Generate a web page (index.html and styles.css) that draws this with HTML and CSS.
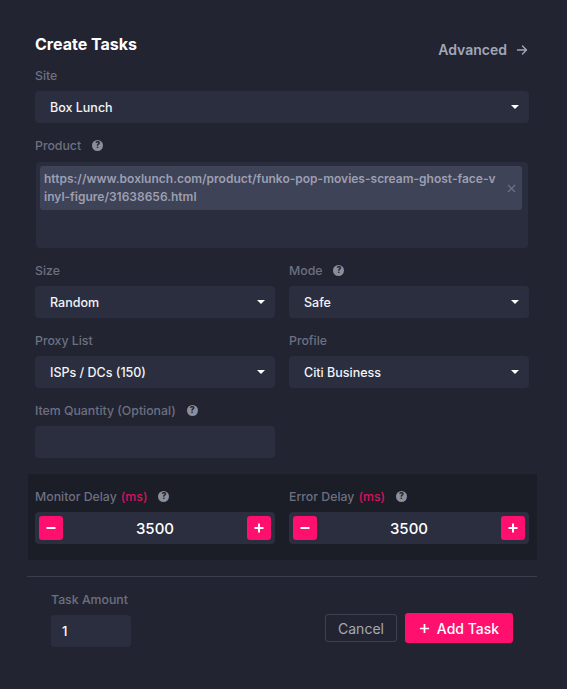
FILE: index.html
```html
<!DOCTYPE html>
<html>
<head>
<meta charset="utf-8">
<link rel="stylesheet" href="styles.css">
</head>
<body>
<div class="modal">
  <div class="content">
    <div class="header">
      <h1 class="title">Create Tasks</h1>
      <div class="advanced">Advanced
        <svg class="arrow" width="12" height="12" viewBox="0 0 12 12"><path d="M1.5 6h9M6.5 2l4 4-4 4" fill="none" stroke="currentColor" stroke-width="1.4" stroke-linecap="round" stroke-linejoin="round"/></svg>
      </div>
    </div>

    <div class="field">
      <label class="label">Site</label>
      <div class="select"><span>Box Lunch</span><i class="caret"></i></div>
    </div>

    <div class="field">
      <label class="label">Product <span class="help">?</span></label>
      <div class="textarea">
        <div class="chip">
          <span class="chip-text"><span class="line">https://www.boxlunch.com/product/funko-pop-movies-scream-ghost-face-v</span><span class="line">inyl-figure/31638656.html</span></span>
          <svg class="chip-x" width="9" height="9" viewBox="0 0 9 9"><path d="M1 1l7 7M8 1L1 8" stroke="currentColor" stroke-width="1.2"/></svg>
        </div>
      </div>
    </div>

    <div class="grid">
      <div class="field">
        <label class="label">Size</label>
        <div class="select"><span>Random</span><i class="caret"></i></div>
      </div>
      <div class="field">
        <label class="label">Mode <span class="help">?</span></label>
        <div class="select"><span>Safe</span><i class="caret"></i></div>
      </div>
      <div class="field">
        <label class="label">Proxy List</label>
        <div class="select"><span>ISPs / DCs (150)</span><i class="caret"></i></div>
      </div>
      <div class="field">
        <label class="label">Profile</label>
        <div class="select"><span>Citi Business</span><i class="caret"></i></div>
      </div>
      <div class="field last">
        <label class="label">Item Quantity (Optional) <span class="help">?</span></label>
        <div class="input"></div>
      </div>
    </div>
  </div>

  <div class="delays">
    <div class="grid">
      <div class="field">
        <label class="label">Monitor Delay <span class="ms">(ms)</span> <span class="help">?</span></label>
        <div class="counter">
          <button class="step"><svg width="12" height="12" viewBox="0 0 12 12"><path d="M1.5 6h9" stroke="#fff" stroke-width="2"/></svg></button>
          <span class="value">3500</span>
          <button class="step"><svg width="12" height="12" viewBox="0 0 12 12"><path d="M1.5 6h9M6 1.5v9" stroke="#fff" stroke-width="2"/></svg></button>
        </div>
      </div>
      <div class="field">
        <label class="label">Error Delay <span class="ms">(ms)</span> <span class="help">?</span></label>
        <div class="counter">
          <button class="step"><svg width="12" height="12" viewBox="0 0 12 12"><path d="M1.5 6h9" stroke="#fff" stroke-width="2"/></svg></button>
          <span class="value">3500</span>
          <button class="step"><svg width="12" height="12" viewBox="0 0 12 12"><path d="M1.5 6h9M6 1.5v9" stroke="#fff" stroke-width="2"/></svg></button>
        </div>
      </div>
    </div>
  </div>

  <div class="divider"></div>

  <div class="footer">
    <div class="field">
      <label class="label">Task Amount</label>
      <div class="input small"><span>1</span></div>
    </div>
    <div class="actions">
      <button class="btn-cancel">Cancel</button>
      <button class="btn-add"><svg width="11" height="11" viewBox="0 0 12 12"><path d="M1 6h10M6 1v10" stroke="#fff" stroke-width="1.9"/></svg>Add Task</button>
    </div>
  </div>
</div>
</body>
</html>
```

FILE: styles.css
```css
* { box-sizing: border-box; }
html, body {
  margin: 0;
  padding: 0;
  background: #222531;
  font-family: Inter, "Noto Sans", sans-serif;
}
.modal {
  width: 567px;
  height: 689px;
  padding-top: 32px;
}
.content {
  padding: 0 38px 0 35px;
}
.header {
  display: flex;
  justify-content: space-between;
  align-items: flex-end;
  margin-bottom: 11px;
}
.title {
  margin: 0;
  font-size: 16px;
  line-height: 24px;
  font-weight: 700;
  color: #ffffff;
}
.advanced {
  display: flex;
  align-items: center;
  gap: 9px;
  color: #a3a6b8;
  font-size: 14px;
  font-weight: 600;
  line-height: 18px;
  margin-bottom: -3px;
  margin-right: 1px;
}
.arrow { display: block; }
.field {
  display: flex;
  flex-direction: column;
  gap: 8px;
  margin-bottom: 14px;
}
.label {
  display: flex;
  align-items: center;
  gap: 4px;
  height: 16px;
  font-size: 12.3px;
  font-weight: 500;
  color: #6d7081;
}
.help {
  display: inline-flex;
  align-items: center;
  justify-content: center;
  width: 11px;
  height: 11px;
  border-radius: 50%;
  background: #8b8e9b;
  color: #222531;
  font-size: 8.5px;
  font-weight: 800;
  margin-left: 7px;
  line-height: 1;
}
.ms { color: #d3145f; }
.select, .input {
  height: 32px;
  background: #2a2e3f;
  border-radius: 4px;
  display: flex;
  align-items: center;
  justify-content: space-between;
  padding: 0 10px 0 15px;
  color: #f3f4f7;
  font-size: 12.5px;
  font-weight: 500;
}
.caret {
  width: 0;
  height: 0;
  border-left: 4px solid transparent;
  border-right: 4px solid transparent;
  border-top: 4.5px solid #ffffff;
}
.textarea {
  height: 86px;
  margin: 1px 1px 0 1px;
  background: #292d3e;
  border-radius: 4px;
  padding: 4px 6px 4px 4px;
}
.chip {
  background: #3f4357;
  border-radius: 3px;
  height: 44px;
  display: flex;
  align-items: center;
  justify-content: space-between;
  padding: 0 6px 0 4px;
}
.chip-text {
  display: flex;
  flex-direction: column;
  color: #9c9fb1;
  font-size: 12px;
  font-weight: 600;
  line-height: 18px;
  white-space: nowrap;
}
.chip-x { color: #6f7386; display: block; }
.grid {
  display: grid;
  grid-template-columns: 240px 240px;
  column-gap: 14px;
}
.content .grid { margin-top: 2px; }
.content .field.last { margin-bottom: 16px; }
.delays {
  margin: 0 30px 0 28px;
  background: #1b1d27;
  padding: 14px 7px 16px 7px;
}
.delays .field { margin-bottom: 0; }
.counter {
  height: 32px;
  background: #2a2e3f;
  border-radius: 4px;
  display: flex;
  align-items: center;
  justify-content: space-between;
  padding: 0 4px;
}
.step {
  width: 24px;
  height: 24px;
  border: none;
  border-radius: 3px;
  background: #ff0f6e;
  padding: 0;
  display: flex;
  align-items: center;
  justify-content: center;
}
.value {
  color: #ffffff;
  font-size: 15px;
  font-weight: 500;
}
.divider {
  height: 1px;
  background: #3a3d4b;
  margin: 16px 30px 0 27px;
}
.footer {
  display: flex;
  justify-content: space-between;
  align-items: flex-end;
  padding: 14px 0 0 0;
  margin: 0 54px 0 51px;
}
.footer .field { margin-bottom: 0; }
.input.small {
  width: 80px;
  padding-left: 11px;
  font-size: 13px;
  color: #ffffff;
}
.actions {
  display: flex;
  align-items: center;
  gap: 8px;
  margin-bottom: 4px;
}
.btn-cancel {
  height: 28px;
  width: 72px;
  background: transparent;
  border: 1px solid #3e4150;
  border-radius: 3px;
  color: #a6a9b6;
  font-family: inherit;
  font-size: 14px;
  font-weight: 400;
  padding: 0;
}
.btn-add {
  height: 30px;
  width: 108px;
  background: #ff0f6e;
  border: none;
  border-radius: 3px;
  color: #ffffff;
  font-family: inherit;
  font-size: 14px;
  font-weight: 500;
  display: flex;
  align-items: center;
  justify-content: center;
  gap: 7px;
  padding: 0;
}
```
